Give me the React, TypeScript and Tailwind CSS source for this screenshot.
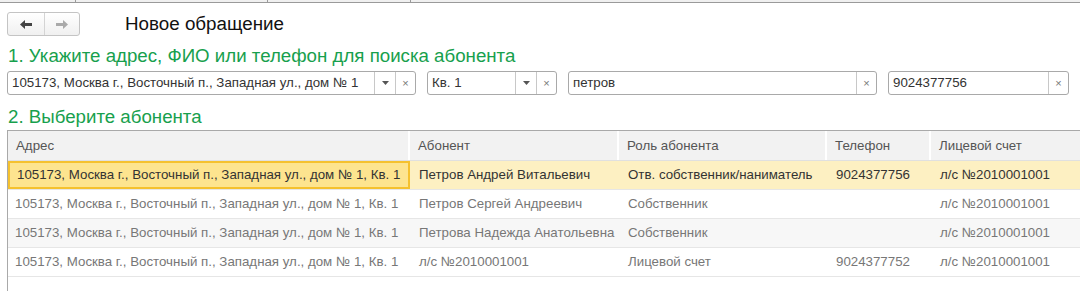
import React from "react";

const font = { fontFamily: '"Liberation Sans", Arial, sans-serif' };

type Row = {
  address: string;
  name: string;
  role: string;
  phone: string;
  account: string;
};

const rows: Row[] = [
  {
    address: "105173, Москва г., Восточный п., Западная ул., дом № 1, Кв. 1",
    name: "Петров Андрей Витальевич",
    role: "Отв. собственник/наниматель",
    phone: "9024377756",
    account: "л/с №2010001001",
  },
  {
    address: "105173, Москва г., Восточный п., Западная ул., дом № 1, Кв. 1",
    name: "Петров Сергей Андреевич",
    role: "Собственник",
    phone: "",
    account: "л/с №2010001001",
  },
  {
    address: "105173, Москва г., Восточный п., Западная ул., дом № 1, Кв. 1",
    name: "Петрова Надежда Анатольевна",
    role: "Собственник",
    phone: "",
    account: "л/с №2010001001",
  },
  {
    address: "105173, Москва г., Восточный п., Западная ул., дом № 1, Кв. 1",
    name: "л/с №2010001001",
    role: "Лицевой счет",
    phone: "9024377752",
    account: "л/с №2010001001",
  },
];

function Field({
  value,
  width,
  dropdown,
}: {
  value: string;
  width: string;
  dropdown?: boolean;
}) {
  return (
    <div
      className={`flex h-[24px] ${width} items-stretch rounded-[3px] border border-[#a9a9a9] bg-white`}
    >
      <div className="flex flex-1 items-center overflow-hidden whitespace-nowrap pl-[4px] text-[13.3px] text-[#333]">
        {value}
      </div>
      {dropdown && (
        <div className="flex w-[21px] items-center justify-center border-l border-[#c8c8c8]">
          <svg width="7" height="4" viewBox="0 0 7 4">
            <path d="M0 0h7L3.5 4z" fill="#555" />
          </svg>
        </div>
      )}
      <div className="flex w-[20px] items-center justify-center border-l border-[#c8c8c8] text-[11px] text-[#777]">
        ×
      </div>
    </div>
  );
}

export default function App() {
  return (
    <div className="h-[291px] w-[1080px] overflow-hidden bg-white" style={font}>
      {/* top tab strip */}
      <div className="flex h-[3px] border-b border-[#9a9a9a] bg-[#f0f0f0]">
        <div className="w-[76px] border-r border-[#9a9a9a]" />
        <div className="w-[192px] border-r border-[#9a9a9a]" />
        <div className="w-[143px] border-r border-[#9a9a9a]" />
      </div>

      {/* nav + title */}
      <div className="flex items-center pl-[7px] pt-[7px]">
        <div className="flex h-[24px] w-[73px] rounded-[3px] border border-[#c4c4c4] bg-gradient-to-b from-white to-[#f0f0f0]">
          <div className="flex w-[37px] items-center justify-center border-r border-[#d4d4d4]">
            <svg width="12" height="9" viewBox="0 0 12 9">
              <path d="M0 4.5L5 0v3h7v3H5v3z" fill="#444" />
            </svg>
          </div>
          <div className="flex flex-1 items-center justify-center">
            <svg width="12" height="9" viewBox="0 0 12 9">
              <path d="M12 4.5L7 0v3H0v3h7v3z" fill="#aaa" />
            </svg>
          </div>
        </div>
        <div className="ml-[45px] text-[18.8px] text-[#111]">Новое обращение</div>
      </div>

      {/* step 1 */}
      <div className="pl-[8px] pt-[7px] text-[18.7px] leading-[22px] text-[#17a04d]">
        1. Укажите адрес, ФИО или телефон для поиска абонента
      </div>
      <div className="flex gap-[11px] pl-[7px] pt-[4px]">
        <Field
          value="105173, Москва г., Восточный п., Западная ул., дом № 1"
          width="w-[409px]"
          dropdown
        />
        <Field value="Кв. 1" width="w-[130px]" dropdown />
        <Field value="петров" width="w-[309px]" />
        <Field value="9024377756" width="w-[181px]" />
      </div>

      {/* step 2 */}
      <div className="pl-[8px] pt-[11px] text-[18.7px] leading-[22px] text-[#17a04d]">
        2. Выберите абонента
      </div>

      <div className="ml-[7px] mt-[2px] border-l border-t border-[#a9a9a9] text-[13.3px]">
        <div className="grid h-[30px] grid-cols-[402px_209px_208px_104px_150px] border-b border-[#e0e0e0] bg-[#f2f2f2] text-[#555]">
          {["Адрес", "Абонент", "Роль абонента", "Телефон", "Лицевой счет"].map(
            (h, i) => (
              <div
                key={h}
                className={`flex items-center pl-[8px] ${i < 4 ? "border-r-2 border-white" : ""}`}
              >
                {h}
              </div>
            )
          )}
        </div>
        {rows.map((r, idx) => {
          const selected = idx === 0;
          return (
            <div
              key={idx}
              className={`grid h-[29px] grid-cols-[402px_209px_208px_104px_150px] border-b border-[#e6e6e6] ${
                selected
                  ? "bg-[#fdf0c2] text-[#333]"
                  : idx === 2
                  ? "bg-[#f7f7f7] text-[#777]"
                  : "bg-white text-[#777]"
              }`}
            >
              <div
                className={`flex items-center whitespace-nowrap pl-[7px] ${
                  selected ? "border-2 border-[#f5c12e] bg-[#fde48f]" : ""
                }`}
              >
                {r.address}
              </div>
              <div className="flex items-center whitespace-nowrap pl-[9px]">{r.name}</div>
              <div className="flex items-center whitespace-nowrap pl-[9px]">{r.role}</div>
              <div className="flex items-center whitespace-nowrap pl-[9px]">{r.phone}</div>
              <div className="flex items-center whitespace-nowrap pl-[9px]">{r.account}</div>
            </div>
          );
        })}
        <div className="h-[20px]" />
      </div>
    </div>
  );
}
